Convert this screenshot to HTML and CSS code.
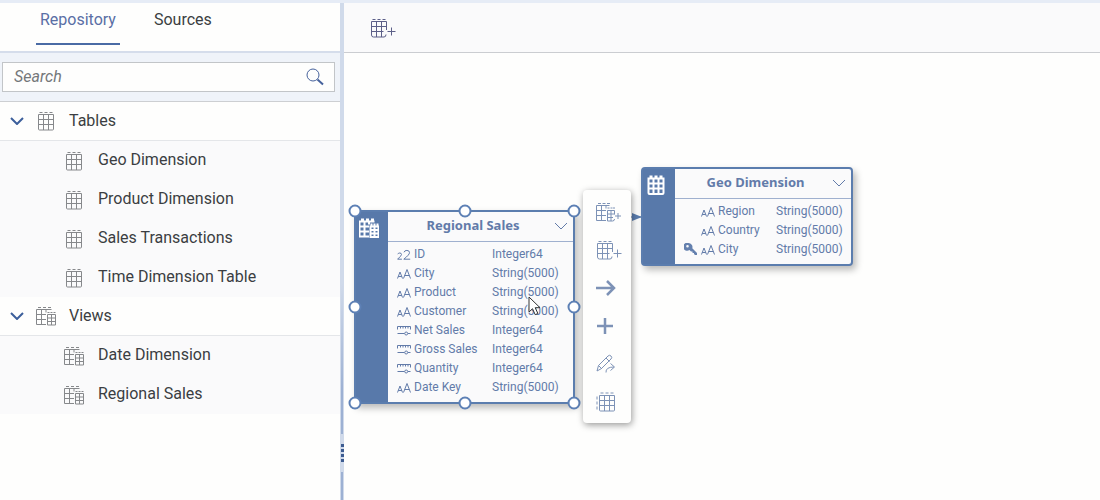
FILE: index.html
```
<!DOCTYPE html>
<html lang="en">
<head>
<meta charset="utf-8">
<title>Data Builder</title>
<link rel="stylesheet" href="styles.css">
</head>
<body>
<svg class="sprite" aria-hidden="true">
  <symbol id="table" viewBox="0 0 18 20"><path d="M1.500 3.500h15v14.500q0 1-1 1h-13q-1 0-1-1zM1.500 8.500h15M1.500 13.500h15M6.500 3.500v15.500M11.500 3.500v15.500M2.500 1.500h3M7.500 1.500h3M12.500 1.500h3"/></symbol>
  <symbol id="view" viewBox="0 0 20 20"><path d="M10 18.500h-9.500v-15h15M.5 8.500h9.500M.5 13.500h9.500M5.500 3.500v15M10 3.500v3M2 1.500h3M7 1.500h3M12 1.500h3M11.500 8.500h8v10.500h-8zM11.500 12h8M11.500 15.500h8M15.500 8.500v10.500M11.500 6.500h2M14.500 6.500h2M17.500 6.500h2"/></symbol>
  <symbol id="text-type" viewBox="0 0 14 11"><path d="M.5 10.500l2.500-6.500 2.500 6.500M1.200 8.500h3.600M6.500 10.500l3.500-9 3.500 9M7.700 7.500h4.600"/></symbol>
  <symbol id="number-type" viewBox="0 0 14 11"><path d="M.7 5.200q.5-1.200 2-1.200 1.800 0 1.800 1.500 0 1.200-3.900 4.700h4.300M7 3.300q.5-1.900 2.900-1.900 2.600 0 2.600 2.300 0 2-5.700 6.500h6.400"/></symbol>
  <symbol id="measure-type" viewBox="0 0 14 11"><path d="M.5 4.500v-3h13v3M3.500 1.500v2M6 1.500v2M8.500 1.500v2M11 1.500v2M.5 8.500h7M11 8.500h2.500"/><circle cx="9.200" cy="8.500" r="1.500"/></symbol>
  <symbol id="table-add" viewBox="0 0 26 20"><path d="M16 16.500q0 2.500-2 2.500h-10.500q-2 0-2-2v-13.500h15v8.500M1.500 8.500h15M1.500 13.500h12M6.500 3.500v15.500M11.500 3.500v15.500M2.500 1.500h3M7.500 1.500h3M12.500 1.500h3M17.500 13.500h8M21.500 9.500v8"/></symbol>
  <symbol id="view-add" viewBox="0 0 26 20"><path d="M10 18.500h-9.500v-15h13M.5 8.500h9.500M.5 13.500h9.500M5.500 3.500v15M10 3.500v3M2 1.500h3M6.500 1.500h3M11 1.500h3M18.500 17q0 2-2 2h-5v-10.500h7v4M11.500 12h7M11.500 15.500h5.500M15 8.500v10.500M11.500 6h2M14.500 6h2M17 6h2M19 14h6M22 11v6"/></symbol>
  <symbol id="chevron" viewBox="0 0 14 8"><path d="M1 1l6 6 6-6"/></symbol>
</svg>
<div class="app">
  <aside class="sidebar">
    <nav class="tabs">
      <button class="tab selected" type="button">Repository</button>
      <button class="tab" type="button">Sources</button>
    </nav>
    <form class="search">
      <input class="search-input" type="text" placeholder="Search" aria-label="Search">
      <button class="search-button" type="button" aria-label="Start search"><svg class="lens" viewBox="0 0 18 18"><circle cx="7" cy="7" r="6"/><path class="handle" d="M11.500 11.500l5.500 5"/></svg></button>
    </form>
    <section class="group">
      <button class="row group-row" type="button"><svg class="arrow"><use href="#chevron"/></svg><svg class="icon"><use href="#table"/></svg><span>Tables</span></button>
      <button class="row item" type="button"><svg class="icon"><use href="#table"/></svg><span>Geo Dimension</span></button>
      <button class="row item" type="button"><svg class="icon"><use href="#table"/></svg><span>Product Dimension</span></button>
      <button class="row item" type="button"><svg class="icon"><use href="#table"/></svg><span>Sales Transactions</span></button>
      <button class="row item" type="button"><svg class="icon"><use href="#table"/></svg><span>Time Dimension Table</span></button>
    </section>
    <section class="group">
      <button class="row group-row" type="button"><svg class="arrow"><use href="#chevron"/></svg><svg class="icon"><use href="#view"/></svg><span>Views</span></button>
      <button class="row item" type="button"><svg class="icon"><use href="#view"/></svg><span>Date Dimension</span></button>
      <button class="row item" type="button"><svg class="icon"><use href="#view"/></svg><span>Regional Sales</span></button>
    </section>
  </aside>
  <div class="splitter"><span class="bar fade"></span><span class="grip"></span><span class="bar"></span></div>
  <main class="main">
    <header class="toolbar"><button class="tool" type="button" aria-label="Add table"><svg class="wide-icon"><use href="#table-add"/></svg></button></header>
    <div class="canvas">
      <svg class="link" viewBox="0 0 14 8"><path d="M0 4h14"/><path class="tip" d="M2 0l10 4-10 4z"/></svg>
      <article class="node geo">
        <div class="stripe"><svg class="node-icon"><use href="#table"/></svg></div>
        <div class="node-body">
          <div class="node-head"><h2 class="node-title">Geo Dimension</h2><button class="fold" type="button" aria-label="Collapse"><svg class="fold-icon"><use href="#chevron"/></svg></button></div>
          <table class="fields">
            <tr><td class="key"></td><td class="kind"><svg><use href="#text-type"/></svg></td><td class="name">Region</td><td>String(5000)</td></tr>
            <tr><td class="key"></td><td class="kind"><svg><use href="#text-type"/></svg></td><td class="name">Country</td><td>String(5000)</td></tr>
            <tr><td class="key"><svg class="key-icon" viewBox="0 0 13 13"><path fill-rule="evenodd" d="M4.500 0a4 4 0 0 1 3.800 5.200l4.700 4.800v2h-2l-1-1v-1h-1.500v-1.500h-1.500l-1.500-1.500a4 4 0 1 1-1-7zM3.500 2a1.300 1.300 0 1 0 0 2.600 1.300 1.300 0 0 0 0-2.600z"/></svg></td><td class="kind"><svg><use href="#text-type"/></svg></td><td class="name">City</td><td>String(5000)</td></tr>
          </table>
        </div>
      </article>
      <article class="node sales">
        <div class="stripe"><svg class="node-icon"><use href="#view"/></svg></div>
        <div class="node-body">
          <div class="node-head"><h2 class="node-title">Regional Sales</h2><button class="fold" type="button" aria-label="Collapse"><svg class="fold-icon"><use href="#chevron"/></svg></button></div>
          <table class="fields">
            <tr><td class="kind"><svg><use href="#number-type"/></svg></td><td class="name">ID</td><td>Integer64</td></tr>
            <tr><td class="kind"><svg><use href="#text-type"/></svg></td><td class="name">City</td><td>String(5000)</td></tr>
            <tr><td class="kind"><svg><use href="#text-type"/></svg></td><td class="name">Product</td><td>String(5000)</td></tr>
            <tr><td class="kind"><svg><use href="#text-type"/></svg></td><td class="name">Customer</td><td>String(5000)</td></tr>
            <tr><td class="kind"><svg><use href="#measure-type"/></svg></td><td class="name">Net Sales</td><td>Integer64</td></tr>
            <tr><td class="kind"><svg><use href="#measure-type"/></svg></td><td class="name">Gross Sales</td><td>Integer64</td></tr>
            <tr><td class="kind"><svg><use href="#measure-type"/></svg></td><td class="name">Quantity</td><td>Integer64</td></tr>
            <tr><td class="kind"><svg><use href="#text-type"/></svg></td><td class="name">Date Key</td><td>String(5000)</td></tr>
          </table>
        </div>
        <i class="handle-dot top left"></i><i class="handle-dot top center"></i><i class="handle-dot top right"></i>
        <i class="handle-dot middle left"></i><i class="handle-dot middle right"></i>
        <i class="handle-dot bottom left"></i><i class="handle-dot bottom center"></i><i class="handle-dot bottom right"></i>
      </article>
      <div class="actions">
        <button class="action" type="button" aria-label="Add view"><svg class="wide-icon"><use href="#view-add"/></svg></button>
        <button class="action" type="button" aria-label="Add table"><svg class="wide-icon"><use href="#table-add"/></svg></button>
        <button class="action" type="button" aria-label="Create association"><svg class="action-icon bold" viewBox="0 0 20 20"><path d="M0 10h18M11 3l7 7-7 7"/></svg></button>
        <button class="action" type="button" aria-label="Add"><svg class="action-icon bold" viewBox="0 0 20 20"><path d="M1 10h16M9 2v16"/></svg></button>
        <button class="action" type="button" aria-label="Open in editor"><svg class="action-icon" viewBox="0 0 20 20"><path d="M1 17l1.500-5.500 9.500-9.500q1.500-1.500 3 0 1.500 1.500 0 3l-9.500 9.500zM10 4l3.500 3.500M2.500 11.500l3.500 3.500M10 18.500q-.5-5.500 8-5.500M14.500 9.500l4 3.500-4 3.500"/></svg></button>
        <button class="action" type="button" aria-label="Preview data"><svg class="action-icon" viewBox="0 0 20 20"><path d="M3.500 3.500h15v14.500q0 1-1 1h-13q-1 0-1-1zM3.500 8.500h15M3.500 13.500h15M8.500 3.500v15.500M13.500 3.500v15.500M4.500 1h3M9.500 1h3M14.500 1h3M1 4.500v3M1 9.500v3M1 14.500v3"/></svg></button>
      </div>
      <svg class="pointer" viewBox="0 0 13 20"><path d="M1 1v15l3.500-3.300 2.700 6 2.700-1.200-2.700-5.800h4.800z"/></svg>
    </div>
  </main>
</div>
</body>
</html>
```

FILE: styles.css
```
* { box-sizing: border-box; }
body { margin: 0; background: #fefefd; font-family: Roboto, "Liberation Sans", sans-serif; color: #3b3e42; }
button { font: inherit; color: inherit; background: none; border: 0; padding: 0; }
svg { display: block; fill: none; stroke: currentColor; stroke-width: 1; }
.sprite { position: absolute; width: 0; height: 0; }
.app { display: flex; min-height: 100vh; border-top: 3px solid #e6ecf6; }

.sidebar { flex: 0 0 340px; }
.tabs { display: flex; gap: 30px; height: 50px; padding: 0 36px; border-bottom: 2px solid #d5ddeb; font-size: 16px; }
.tab { height: 42px; padding: 0 4px 8px; border-bottom: 2px solid transparent; }
.tab.selected { color: #5a6fa5; border-color: #4a6ba5; }
.search { display: flex; height: 49px; padding: 9px 5px 9px 2px; background: #eff3f9; border-bottom: 1px solid #cdcfd2; }
.search-input { flex: 1; min-width: 0; padding: 0 11px 2px; border: 1px solid #c2c5c8; border-right: 0; background: #fefefd; border-radius: 0; font: italic 16px Roboto, sans-serif; color: #333; outline: 0; }
.search-input::placeholder { color: #74777a; }
.search-button { width: 29px; border: 1px solid #c2c5c8; border-left: 0; background: #fefefd; }
.lens { width: 18px; height: 18px; color: #46629c; }
.lens .handle { stroke-width: 2; }

.row { display: flex; align-items: center; width: 100%; height: 39px; font-size: 16px; text-align: left; }
.row span { padding-bottom: 2px; }
.group-row { padding-left: 10px; gap: 12px; border-bottom: 1px solid #e4e6e9; background: #fefefd; }
.item { padding-left: 64px; gap: 14px; background: #fafafb; }
.icon { width: 20px; height: 20px; color: #86888b; }
.arrow { width: 14px; height: 8px; color: #3c5f9b; stroke-width: 2; }
.group-row .icon { margin-right: 1px; }

.splitter { flex: 0 0 4px; display: flex; flex-direction: column; align-items: center; background: #d0daea; }
.bar { width: 2px; height: 28px; background: #9db1d3; }
.bar.fade { flex: 1; margin-bottom: 10px; background: linear-gradient(transparent 65%, #9db1d3 90%); }
.grip { width: 3px; height: 18px; margin-bottom: 10px; background: repeating-linear-gradient(#3d5c91 0 3px, #d0daea 3px 5px); }

.main { flex: 1; min-width: 0; display: flex; flex-direction: column; }
.toolbar { display: flex; align-items: center; height: 50px; padding-left: 26px; background: #fafafb; border-bottom: 1px solid #cbcdd1; color: #5c5f88; }
.wide-icon { width: 26px; height: 20px; }
.canvas { position: relative; flex: 1; }

.node { position: absolute; display: flex; border: 2px solid #5b7dae; border-radius: 4px; background: #fafafb; box-shadow: 3px 4px 7px #0004; color: #627ba9; }
.geo { left: 297px; top: 114px; width: 212px; }
.sales { left: 10px; top: 157px; width: 221px; border-radius: 0; }
.stripe { flex: 0 0 32px; background: #5879aa; color: #fff; padding: 6px 3px; }
.node-icon { width: 20px; height: 20px; stroke-width: 2; }
.node-body { flex: 1; min-width: 0; }
.node-head { display: flex; align-items: center; height: 30px; padding-right: 5px; border-bottom: 1px solid #9fb0cf; }
.node-title { flex: 1; margin: 0 0 0 4px; padding-bottom: 3px; font: bold 13px "Noto Sans", sans-serif; text-align: center; }
.fold { padding-bottom: 2px; }
.fold-icon { width: 14px; height: 8px; }
.fields { border-collapse: collapse; margin: 3px 0 5px 9px; font-size: 12px; }
.fields td { height: 19px; padding: 0; line-height: 19px; white-space: nowrap; }
.fields .key { width: 17px; }
.kind { width: 17px; min-width: 17px; }
.kind svg { width: 14px; height: 11px; }
.fields .name { width: 78px; }
.geo .fields .name { width: 58px; }
.key-icon { width: 13px; height: 13px; fill: #6480ae; stroke: none; }

.handle-dot { position: absolute; width: 13px; height: 13px; border: 2px solid #5d80b5; border-radius: 50%; background: #fff; transform: translate(-50%, -50%); }
.top { top: -1px; }
.middle { top: 50%; }
.bottom { top: calc(100% + 1px); }
.left { left: -1px; }
.center { left: 50%; }
.right { left: calc(100% + 1px); }

.actions { position: absolute; left: 239px; top: 137px; width: 48px; padding: 3px 0 2px 13px; display: grid; background: #fefefd; border-radius: 4px; box-shadow: 1px 2px 7px #0006; color: #7d92b6; }
.action { height: 38px; }
.action-icon { width: 20px; height: 20px; }
.bold { stroke-width: 2.500; }
.link { position: absolute; left: 286px; top: 160px; width: 14px; height: 8px; color: #5b7dae; }
.tip { fill: #5b7dae; stroke: none; }
.pointer { position: absolute; left: 184px; top: 243px; width: 13px; height: 20px; fill: #fff; stroke: #333; }
```
